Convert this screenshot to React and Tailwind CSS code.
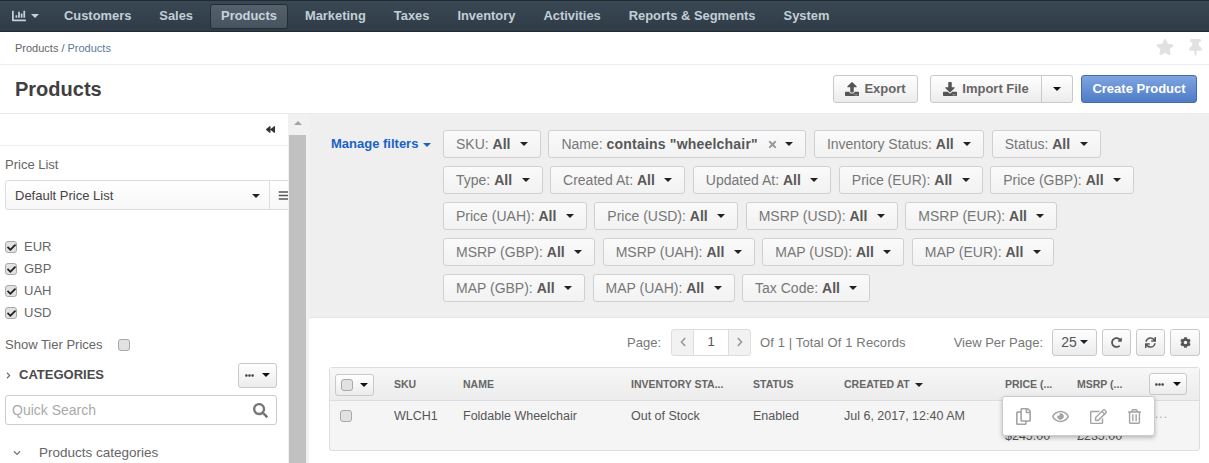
import React from "react";
import { FaChartBar, FaUpload, FaDownload, FaStar, FaThumbtack, FaBackward, FaCog, FaSync, FaRedoAlt, FaRegCopy, FaRegEye, FaRegEdit, FaRegTrashAlt, FaSearch, FaChevronLeft, FaChevronRight, FaChevronDown, FaTimes, FaBars, FaCheck, FaEllipsisH } from "react-icons/fa";

const Caret = ({ className = "border-t-[#333]" }) => (
  <span className={`inline-block w-0 h-0 border-x-[4px] border-x-transparent border-t-[4px] ${className}`} />
);

const btn = "rounded-[3px] border border-[#c9c9c9] bg-gradient-to-b from-white to-[#ececec]";

const Check = ({ on }) => (
  <span className="w-[12px] h-[12px] rounded-[3px] border border-[#a8a8a8] bg-[#e2e2e2] flex items-center justify-center shrink-0">
    {on && <FaCheck className="text-[9px] text-[#222]" />}
  </span>
);

const nav = ["Customers", "Sales", "Products", "Marketing", "Taxes", "Inventory", "Activities", "Reports & Segments", "System"];
const filters = [
  ["SKU:", "All"],
  ["Name:", 'contains "wheelchair"', true],
  ["Inventory Status:", "All"],
  ["Status:", "All"],
  ["Type:", "All"],
  ["Created At:", "All"],
  ["Updated At:", "All"],
  ["Price (EUR):", "All"],
  ["Price (GBP):", "All"],
  ["Price (UAH):", "All"],
  ["Price (USD):", "All"],
  ["MSRP (USD):", "All"],
  ["MSRP (EUR):", "All"],
  ["MSRP (GBP):", "All"],
  ["MSRP (UAH):", "All"],
  ["MAP (USD):", "All"],
  ["MAP (EUR):", "All"],
  ["MAP (GBP):", "All"],
  ["MAP (UAH):", "All"],
  ["Tax Code:", "All"],
];

const cols = "grid grid-cols-[64px_69px_168px_122px_91px_161px_72px_72px_1fr]";

export default function App() {
  return (
    <div className="w-[1209px] h-[463px] overflow-hidden bg-white flex flex-col text-[13px] text-[#666] font-['Liberation_Sans',Arial,sans-serif]">
      <header className="h-[32px] shrink-0 bg-gradient-to-b from-[#3a4854] to-[#2f3c47] border-y border-y-[#1f2a33] flex items-center pl-[12px]">
        <div className="flex items-center gap-[5px] w-[41px] text-[#c5d1da]">
          <FaChartBar className="text-[14px]" />
          <Caret className="border-t-[#c5d1da]" />
        </div>
        <nav className="flex items-center gap-[6px]">
          {nav.map((n) => (
            <span
              key={n}
              className={`h-[25px] px-[10px] flex items-center font-bold text-[12.9px] rounded-[3px] ${
                n === "Products"
                  ? "bg-gradient-to-b from-[#54616d] to-[#47545f] border border-[#222d36] text-[#c9d3db]"
                  : "text-[#c3ced6] border border-transparent"
              }`}
            >
              {n}
            </span>
          ))}
        </nav>
      </header>

      <div className="h-[33px] shrink-0 border-b border-[#eee] flex items-center justify-between pl-[15px] pr-[5px] text-[11px]">
        <span className="text-[#666]">
          Products<span className="mx-[3px]">/</span><span className="text-[#5a7a9c]">Products</span>
        </span>
        <div className="flex items-center gap-[13px] text-[#e1e1e1] pb-[2px]">
          <FaStar className="text-[18px]" />
          <FaThumbtack className="text-[17px]" />
        </div>
      </div>

      <div className="h-[48px] shrink-0 flex items-center justify-between pl-[15px] pr-[12px]">
        <h1 className="text-[20px] font-bold text-[#404040]">Products</h1>
        <div className="flex items-center">
          <button className={`${btn} h-[28px] w-[85px] flex items-center justify-center gap-[5px] font-bold text-[#666]`}>
            <FaUpload className="text-[14px] text-[#555]" /> Export
          </button>
          <div className="flex ml-[12px]">
            <button className={`${btn} h-[28px] w-[112px] rounded-r-none flex items-center justify-center gap-[5px] font-bold text-[#666]`}>
              <FaDownload className="text-[14px] text-[#555]" /> Import File
            </button>
            <button className={`${btn} h-[28px] w-[31px] border-l-0 rounded-l-none flex items-center justify-center`}>
              <Caret className="border-t-[#111]" />
            </button>
          </div>
          <button className="h-[28px] w-[116px] ml-[8px] rounded-[3px] border border-[#3f6cb0] bg-gradient-to-b from-[#7fa5e0] to-[#4e7cc6] text-white font-bold">
            Create Product
          </button>
        </div>
      </div>

      <main className="flex-1 min-h-0 flex border-t border-[#ebebeb]">
        <aside className="w-[288px] shrink-0 overflow-hidden">
          <div className="h-[32px] border-b border-[#eee] flex items-center justify-end pr-[13px]">
            <FaBackward className="text-[9px] text-[#333]" />
          </div>
          <div className="pl-[5px] pt-[11px]">
            <div className="leading-[15px]">Price List</div>
            <div className="flex h-[30px] mt-[8px] w-[300px] rounded-[3px] border border-[#ddd] bg-gradient-to-b from-white to-[#f7f7f7]">
              <div className="w-[264px] pl-[9px] pr-[9px] pt-[1px] flex items-center justify-between text-[#444] border-r border-[#ddd]">
                <span>Default Price List</span>
                <Caret className="border-t-[#222]" />
              </div>
              <div className="pl-[8px] flex items-center">
                <FaBars className="text-[11px] text-[#555]" />
              </div>
            </div>
            <div className="mt-[29px] flex flex-col gap-[6px]">
              {["EUR", "GBP", "UAH", "USD"].map((c) => (
                <div key={c} className="flex items-center gap-[7px] h-[16px]">
                  <Check on />
                  <span>{c}</span>
                </div>
              ))}
            </div>
            <div className="flex items-center mt-[16px] h-[16px]">
              Show Tier Prices
              <span className="ml-[15px]"><Check /></span>
            </div>
            <div className="flex items-center justify-between mt-[10px] h-[24px] w-[272px]">
              <div className="flex items-center gap-[7px] font-bold text-[#4a4a4a]">
                <FaChevronRight className="text-[7px] text-[#666]" />
                CATEGORIES
              </div>
              <div className={`${btn} w-[39px] h-[25px] flex items-center justify-between px-[6px]`}>
                <FaEllipsisH className="text-[9px] text-[#444]" />
                <Caret className="border-t-[#111]" />
              </div>
            </div>
            <div className="flex items-center justify-between mt-[8px] h-[30px] w-[272px] rounded-[3px] border border-[#ccc] pl-[6px] pr-[8px] text-[14px] text-[#aaa]">
              Quick Search
              <FaSearch className="text-[15px] text-[#777]" />
            </div>
            <div className="flex items-center mt-[18px] pl-[8px] gap-[18px]">
              <FaChevronDown className="text-[8px] text-[#777]" />
              <span className="text-[13.5px]">Products categories</span>
            </div>
          </div>
        </aside>

        <div className="w-[21px] shrink-0 bg-[#f1f1f1] flex flex-col">
          <div className="h-[21px] flex items-start justify-center pt-[7px] pr-[2px]">
            <span className="w-0 h-0 border-x-[4px] border-x-transparent border-b-[4px] border-b-[#a3a3a3]" />
          </div>
          <div className="flex-1 bg-[#c1c1c1] ml-[1px] mr-[3px]" />
        </div>

        <section className="flex-1 min-w-0 flex flex-col">
          <div className="h-[204px] shrink-0 bg-[#efefef] border-b border-[#e4e4e4] flex pl-[22px] pt-[16px]">
            <div className="w-[112px] shrink-0 flex items-start pt-[7px] text-[#1a62c7] font-bold gap-[5px]">
              <span className="leading-[14px]">Manage filters</span>
              <span className="mt-[6px] flex"><Caret className="border-t-[#1a62c7]" /></span>
            </div>
            <div className="flex flex-wrap gap-x-[7.5px] gap-y-[8px] content-start w-[705px] text-[14px]">
              {filters.map(([a, b, x]) => (
                <div key={a} className="h-[28px] rounded-[3px] border border-[#d0d0d0] bg-gradient-to-b from-[#fafafa] to-[#f2f2f2] flex items-center pl-[12px] pr-[12px] text-[#777] whitespace-pre">
                  {a} <b className={x ? "text-[#585858] tracking-[0.2px]" : "text-[#585858]"}>{b}</b>
                  {x && <FaTimes className="text-[11px] text-[#999] ml-[9px] mr-[-2px]" />}
                  <span className="ml-[9.5px] flex"><Caret className="border-t-[#222]" /></span>
                </div>
              ))}
            </div>
          </div>

          <div className="flex-1 min-h-0 pl-[20px] pr-[9px] pt-[10px]">
            <div className="h-[28px] flex items-center justify-end text-[#777]">
              <span className="pt-[1px]">Page:</span>
              <div className="ml-[10px] h-[27px] w-[80px] flex rounded-[3px] border border-[#ddd] bg-[#f2f2f2]">
                <span className="w-[21px] flex items-center justify-center"><FaChevronLeft className="text-[10px] text-[#999]" /></span>
                <span className="flex-1 bg-white border-x border-[#ddd] flex items-center justify-center text-[#555]">1</span>
                <span className="w-[21px] flex items-center justify-center"><FaChevronRight className="text-[10px] text-[#999]" /></span>
              </div>
              <span className="ml-[9px] pt-[1px] tracking-[0.12px]">Of 1 | Total Of 1 Records</span>
              <span className="ml-[48px] pt-[1px]">View Per Page:</span>
              <div className={`${btn} ml-[9px] w-[45px] h-[27px] flex items-center justify-center gap-[3px] text-[14px] text-[#555]`}>
                25 <Caret className="border-t-[#222]" />
              </div>
              {[FaRedoAlt, FaSync, FaCog].map((I, i) => (
                <div key={i} className={`${btn} ml-[5px] w-[29px] last:w-[30px] h-[27px] flex items-center justify-center`}>
                  <I className="text-[11px] text-[#555]" />
                </div>
              ))}
            </div>

            <div className="relative mt-[11px] h-[84px] rounded-[3px] border border-[#ddd] bg-[#f5f5f5] text-[12.5px] text-[#555]">
              <div className={`${cols} h-[33px] pt-[1px] border-b border-[#ddd] bg-gradient-to-b from-[#f7f7f7] to-[#ececec] items-center text-[10.5px] font-bold text-[#666]`}>
                <div className="pl-[5px]">
                  <div className={`${btn} w-[39px] h-[22px] flex items-center justify-between px-[5px]`}>
                    <Check />
                    <Caret className="border-t-[#111]" />
                  </div>
                </div>
                <span>SKU</span>
                <span>NAME</span>
                <span>INVENTORY STA...</span>
                <span>STATUS</span>
                <span className="flex items-center gap-[5px]">CREATED AT <Caret className="border-t-[#222]" /></span>
                <span>PRICE (...</span>
                <span>MSRP (...</span>
              </div>
              <div className={`${btn} absolute right-[12px] top-[5px] w-[38px] h-[22px] flex items-center justify-between px-[5px]`}>
                <FaEllipsisH className="text-[9px] text-[#444]" />
                <Caret className="border-t-[#111]" />
              </div>
              <div className={`${cols} pt-[7px] leading-[16px]`}>
                <div className="pl-[10px] pt-[2px]"><Check /></div>
                <span>WLCH1</span>
                <span>Foldable Wheelchair</span>
                <span>Out of Stock</span>
                <span>Enabled</span>
                <span>Jul 6, 2017, 12:40 AM</span>
                <span className="pt-[20px]">$245.00</span>
                <span className="pt-[20px]">£235.00</span>
                <span className="text-[#aaa] text-[12px] tracking-[1px] pl-[6px] leading-[12px]">...</span>
              </div>
              <div className="absolute left-[672px] top-[28px] w-[153px] h-[40px] rounded-[3px] bg-white border border-[#ccc] shadow-[0_2px_4px_rgba(0,0,0,0.25)] flex items-center justify-between px-[12px] text-[#a3a3a3] text-[17px]">
                <FaRegCopy />
                <FaRegEye />
                <FaRegEdit />
                <FaRegTrashAlt className="text-[15px]" />
              </div>
            </div>
          </div>
        </section>
      </main>
    </div>
  );
}
